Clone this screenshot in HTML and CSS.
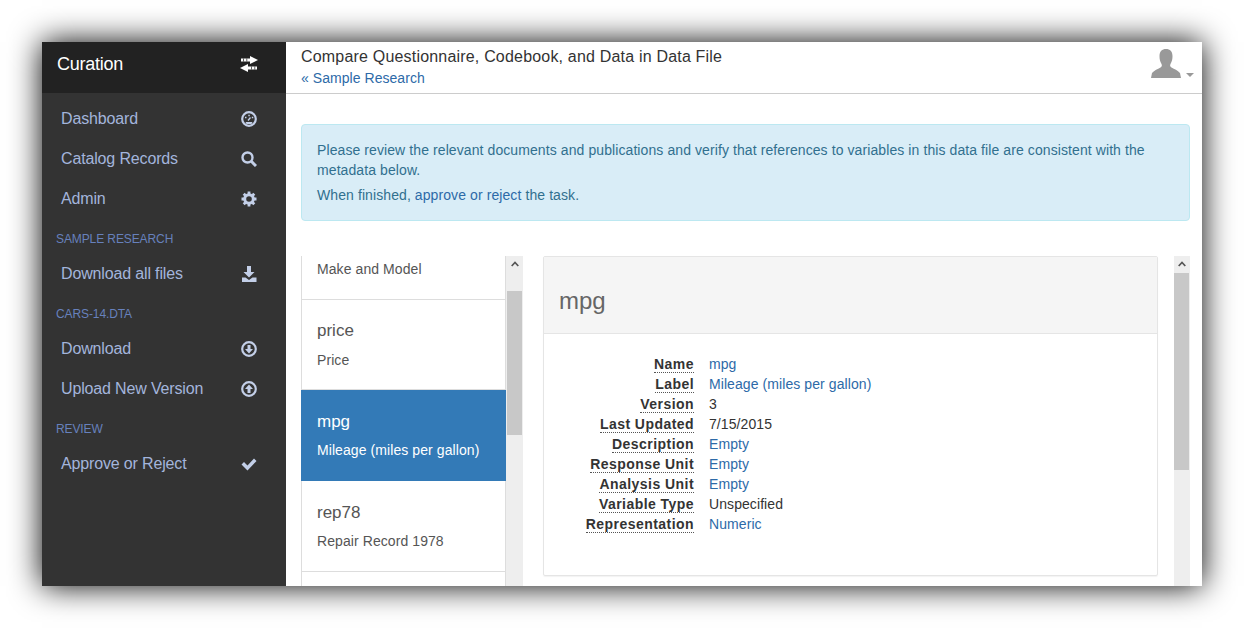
FILE: index.html
```html
<!DOCTYPE html>
<html lang="en">

<head>
    <title>Curation</title>
    <link rel="stylesheet" href="styles.css">
</head>

<body>
    <div class="window">
        <nav class="sidebar">
            <div class="brand">
                <span>Curation</span>
                <svg class="icon" viewBox="0 0 18 16"><path d="M10 0l8 4-8 4V5.500H1v-3h9zM8 8v2.500h9v3H8V16l-8-4z" fill="#fff"/><path d="M3 2.500h.7v3H3zM6.500 2.500h.7v3h-.7zM11 10.500h.7v3H11zM14.500 10.500h.7v3h-.7z" fill="#222"/></svg>
            </div>
            <div class="nav">
                <a class="item" href="#">Dashboard
                    <svg class="icon" viewBox="0 0 16 16"><circle cx="8" cy="8" r="6.800" fill="none" stroke="#c3cfe8" stroke-width="2.200"/><path d="M4 6.500h1.500M7.300 4.500h1.500M10.800 6.500h1.500M7 9.500l2.500-3" stroke="#c3cfe8" stroke-width="1.300"/><path d="M4.500 11h7l-1 2h-5z" fill="#c3cfe8"/></svg>
                </a>
                <a class="item" href="#">Catalog Records
                    <svg class="icon" viewBox="0 0 16 16"><circle cx="6.500" cy="6.500" r="5" fill="none" stroke="#c3cfe8" stroke-width="2.400"/><path d="M10.500 10.500l4.500 4.500" stroke="#c3cfe8" stroke-width="3"/></svg>
                </a>
                <a class="item" href="#">Admin
                    <svg class="icon" viewBox="0 0 16 16"><circle cx="8" cy="8" r="4.300" fill="none" stroke="#c3cfe8" stroke-width="3"/><path d="M8 .500v3M8 12.500v3M.500 8h3M12.500 8h3M2.700 2.700l2.100 2.100M11.200 11.200l2.100 2.100M13.300 2.700l-2.100 2.100M4.800 11.200l-2.100 2.100" stroke="#c3cfe8" stroke-width="2.800"/></svg>
                </a>
                <div class="label">SAMPLE RESEARCH</div>
                <a class="item" href="#">Download all files
                    <svg class="icon" viewBox="0 0 16 16"><path d="M6 0h4v6h3.500L8 11.500 2.500 6H6zM1 11.500h3.500L8 14l3.500-2.500H15.500V16H1z" fill="#c3cfe8"/></svg>
                </a>
                <div class="label">CARS-14.DTA</div>
                <a class="item" href="#">Download
                    <svg class="icon" viewBox="0 0 16 16"><circle cx="8" cy="8" r="6.800" fill="none" stroke="#c3cfe8" stroke-width="2.200"/><path d="M6.500 4h3v4H12l-4 4.500L4 8h2.500z" fill="#c3cfe8"/></svg>
                </a>
                <a class="item" href="#">Upload New Version
                    <svg class="icon" viewBox="0 0 16 16"><circle cx="8" cy="8" r="6.800" fill="none" stroke="#c3cfe8" stroke-width="2.200"/><path d="M6.500 12h3V8H12L8 3.500 4 8h2.500z" fill="#c3cfe8"/></svg>
                </a>
                <div class="label">REVIEW</div>
                <a class="item" href="#">Approve or Reject
                    <svg class="icon" viewBox="0 0 16 16"><path d="M.500 8.500L3 6l3.500 3.500L13 2.500l2.500 2.500-9 9.500z" fill="#c3cfe8"/></svg>
                </a>
            </div>
        </nav>

        <div class="main">
            <header class="topbar">
                <div>
                    <div class="title">Compare Questionnaire, Codebook, and Data in Data File</div>
                    <a class="back" href="#">« Sample Research</a>
                </div>
                <div class="user">
                    <svg class="avatar" viewBox="0 0 30 29"><path d="M15 0c4 0 6.500 2.500 6.500 7 0 3-.5 5.500-2 8-.7 1.200-.5 2.500 1 3.500 3 1.800 6 2.500 8.500 5.500l1 5H0l1-5c2.500-3 5.500-3.700 8.500-5.500 1.500-1 1.700-2.300 1-3.500-1.500-2.500-2-5-2-8 0-4.500 2.500-7 6.500-7z" fill="#999"/></svg>
                    <span class="caret"></span>
                </div>
            </header>

            <div class="content">
                <div class="alert">
                    <p>Please review the relevant documents and publications and verify that references to variables in this data file are consistent with the metadata below.</p>
                    <p>When finished, <a href="#">approve or reject</a> the task.</p>
                </div>

                <div class="columns">
                    <div class="list">
                        <div class="row first"><small>Make and Model</small></div>
                        <div class="row short"><h4>price</h4><small>Price</small></div>
                        <div class="row active"><h4>mpg</h4><small>Mileage (miles per gallon)</small></div>
                        <div class="row"><h4>rep78</h4><small>Repair Record 1978</small></div>
                    </div>
                    <div class="scroll scroll-left">
                        <div class="arrow"><svg viewBox="0 0 8 6"><path d="M.700 5L4 1.500 7.300 5" fill="none" stroke="#555" stroke-width="1.700"/></svg></div>
                        <div class="thumb"></div>
                    </div>

                    <div class="panel">
                        <div class="panel-head">mpg</div>
                        <dl class="fields">
                            <dt><span>Name</span></dt><dd><a href="#">mpg</a></dd>
                            <dt><span>Label</span></dt><dd><a href="#">Mileage (miles per gallon)</a></dd>
                            <dt><span>Version</span></dt><dd>3</dd>
                            <dt><span>Last Updated</span></dt><dd>7/15/2015</dd>
                            <dt><span>Description</span></dt><dd><a href="#">Empty</a></dd>
                            <dt><span>Response Unit</span></dt><dd><a href="#">Empty</a></dd>
                            <dt><span>Analysis Unit</span></dt><dd><a href="#">Empty</a></dd>
                            <dt><span>Variable Type</span></dt><dd>Unspecified</dd>
                            <dt><span>Representation</span></dt><dd><a href="#">Numeric</a></dd>
                        </dl>
                    </div>
                    <div class="scroll scroll-right">
                        <div class="arrow"><svg viewBox="0 0 8 6"><path d="M.700 5L4 1.500 7.300 5" fill="none" stroke="#555" stroke-width="1.700"/></svg></div>
                        <div class="thumb"></div>
                    </div>
                </div>
            </div>
        </div>
    </div>
</body>
</html>
```

FILE: styles.css
```css
html,
body {
    height: 100%;
}

body {
    box-sizing: border-box;
    margin: 0;
    padding: 42px;
    overflow: hidden;
    background: #fff;
    color: #333;
    font-family: "Liberation Sans", Arial, sans-serif;
    font-size: 14px;
    line-height: 20px;
}

a {
    color: #2d6aa8;
    text-decoration: none;
}

.window {
    display: flex;
    width: 1160px;
    height: 544px;
    overflow: hidden;
    background: #fff;
    box-shadow: 0 0 30px #000;
}

.sidebar {
    flex: 0 0 244px;
    background: #333;
}

.brand {
    box-sizing: border-box;
    display: flex;
    align-items: center;
    justify-content: space-between;
    height: 51px;
    padding: 0 28px 8px 15px;
    background: #222;
    color: #fff;
    font-size: 18px;
    letter-spacing: -.25px;
}

.nav {
    padding-top: 6px;
}

.icon {
    width: 18px;
    height: 16px;
}

.item {
    display: flex;
    align-items: center;
    justify-content: space-between;
    height: 40px;
    padding: 0 28px 0 19px;
    color: #a3b5dc;
    font-size: 16px;
    letter-spacing: -.15px;
}

.label {
    box-sizing: border-box;
    height: 35px;
    padding: 10px 14px 0;
    color: #6781bd;
    font-size: 12px;
    letter-spacing: -.1px;
}

.main {
    flex: 1;
    display: flex;
    flex-direction: column;
    min-width: 0;
}

.topbar {
    box-sizing: border-box;
    display: flex;
    justify-content: space-between;
    height: 52px;
    padding: 5px 8px 0 15px;
    border-bottom: 1px solid #ccc;
}

.title {
    margin-bottom: 1px;
    color: #333;
    font-size: 16px;
    letter-spacing: .19px;
}

.back {
    letter-spacing: .05px;
}

.user {
    display: flex;
    align-items: flex-end;
    gap: 5px;
    padding-bottom: 15px;
}

.avatar {
    width: 30px;
    height: 29px;
}

.caret {
    margin-bottom: 1px;
    border-top: 4px solid #999;
    border-left: 4px solid transparent;
    border-right: 4px solid transparent;
}

.content {
    flex: 1;
    min-height: 0;
    padding: 30px 12px 0 15px;
}

.alert {
    padding: 15px;
    border: 1px solid #bce8f1;
    border-radius: 4px;
    background: #d9edf7;
    color: #31708f;
    letter-spacing: .09px;
}

.alert p {
    margin: 0 0 5px;
}

.alert p:last-child {
    margin: 0;
}

.columns {
    display: flex;
    margin-top: 35px;
    height: 330px;
}

.list {
    flex: 0 0 205px;
    box-sizing: border-box;
    border-left: 1px solid #ddd;
    border-right: 1px solid #ddd;
}

.row {
    box-sizing: border-box;
    height: 91px;
    padding: 15px 15px 0;
    border-bottom: 1px solid #ddd;
    color: #555;
}

.row.first {
    height: 44px;
    padding-top: 3px;
}

.row.short {
    height: 90px;
}

.row h4 {
    margin: 7px 0 8px;
    font-size: 17px;
    font-weight: normal;
    line-height: 20px;
}

.row.short h4 {
    margin: 6px 0 9px;
}

.row small {
    font-size: 14px;
    letter-spacing: .08px;
}

.row.active {
    margin: 0 -1px;
    padding-left: 16px;
    background: #337ab7;
    border-bottom-color: #337ab7;
    color: #fff;
}

.scroll {
    flex: 0 0 16px;
    background: #eee;
}

.arrow {
    display: flex;
    justify-content: center;
    padding-top: 5px;
    height: 12px;
}

.arrow svg {
    width: 8px;
    height: 6px;
}

.thumb {
    margin-right: 1px;
    background: #c8c8c8;
}

.scroll-left {
    flex-basis: 17px;
}

.scroll-left .arrow {
    height: 30px;
}

.scroll-left .thumb {
    height: 144px;
    margin-left: 1px;
}

.scroll-right .thumb {
    height: 197px;
}

.panel {
    flex: 0 0 615px;
    box-sizing: border-box;
    height: 320px;
    margin: 0 16px 0 20px;
    border: 1px solid #e5e5e5;
    border-radius: 2px;
    box-shadow: 0 1px 1px rgba(0, 0, 0, .05);
}

.panel-head {
    box-sizing: border-box;
    height: 77px;
    padding: 27px 15px 0;
    border-bottom: 1px solid #e5e5e5;
    background: #f5f5f5;
    color: #666;
    font-size: 24px;
    line-height: 34px;
}

.fields {
    display: grid;
    grid-template-columns: 150px 1fr;
    column-gap: 15px;
    margin: 20px 0 0;
}

.fields dt {
    text-align: right;
    font-weight: bold;
    letter-spacing: .45px;
}

.fields dt span {
    border-bottom: 1px dotted #555;
}

.fields dd {
    margin: 0;
    letter-spacing: .08px;
}
```
